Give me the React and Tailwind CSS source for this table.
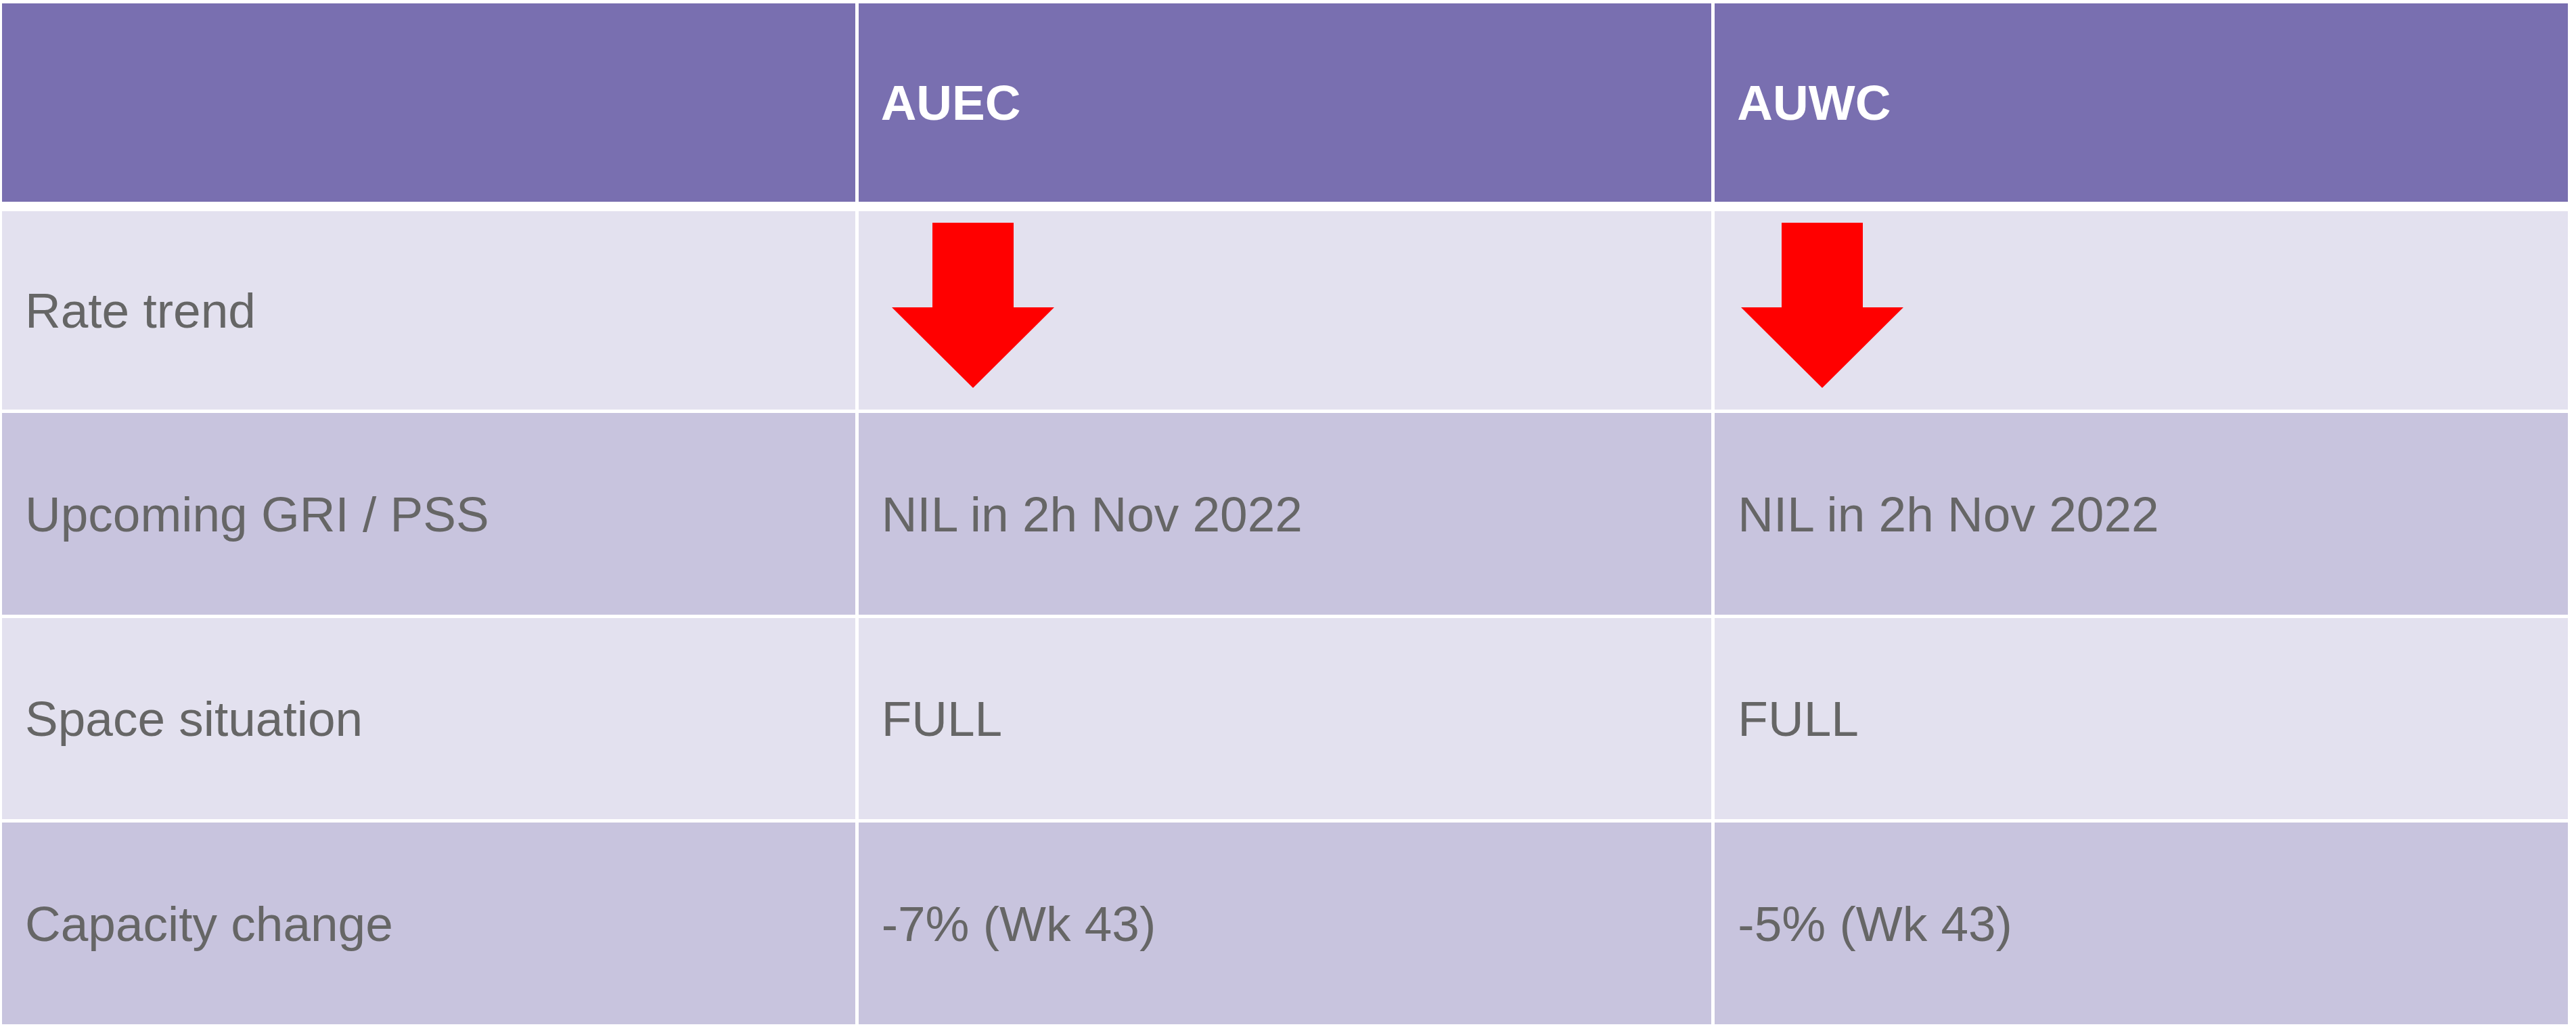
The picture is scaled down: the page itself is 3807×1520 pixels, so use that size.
import React from "react";

const rows = [
  { label: "Rate trend", auec: "arrow", auwc: "arrow", bg: "bg-[#e3e1ef]", h: "h-[293px]" },
  { label: "Upcoming GRI / PSS", auec: "NIL in 2h Nov 2022", auwc: "NIL in 2h Nov 2022", bg: "bg-[#c8c4de]", h: "h-[298px]" },
  { label: "Space situation", auec: "FULL", auwc: "FULL", bg: "bg-[#e3e1ef]", h: "h-[297px]" },
  { label: "Capacity change", auec: "-7% (Wk 43)", auwc: "-5% (Wk 43)", bg: "bg-[#c8c4de]", h: "h-[298px]" },
];

const DownArrow = () => (
  <svg width="240" height="244" viewBox="0 0 240 244">
    <polygon points="60,0 180,0 180,125 240,125 120,244 0,125 60,125" fill="#ff0000" />
  </svg>
);

const Cell = ({ value, bg, h, arrowOffset }) => {
  if (value === "arrow") {
    return (
      <div className={`${bg} ${h} pt-[17px]`} style={{ paddingLeft: arrowOffset }}>
        <DownArrow />
      </div>
    );
  }
  return (
    <div className={`${bg} ${h} flex items-center pl-[34px] text-[73px] text-[#666666]`}>
      {value}
    </div>
  );
};

const App = () => {
  return (
    <div className="min-h-screen bg-white pt-[5px] pl-[3px] font-['Liberation_Sans',Arial,sans-serif] leading-none">
      <div className="w-[3792px]">
        {/* Header */}
        <div className="grid grid-cols-3 gap-x-[5px] h-[293px] mb-[14px]">
          <div className="bg-[#796fb0]" />
          <div className="bg-[#796fb0] flex items-center pl-[33px] text-[73px] font-bold text-white">
            AUEC
          </div>
          <div className="bg-[#796fb0] flex items-center pl-[33px] text-[73px] font-bold text-white">
            AUWC
          </div>
        </div>

        {/* Body rows */}
        <div className="flex flex-col gap-y-[5px]">
          {rows.map((row) => (
            <div key={row.label} className="grid grid-cols-3 gap-x-[5px]">
              <div className={`${row.bg} ${row.h} flex items-center pl-[34px] text-[73px] text-[#666666]`}>
                {row.label}
              </div>
              <Cell value={row.auec} bg={row.bg} h={row.h} arrowOffset={49} />
              <Cell value={row.auwc} bg={row.bg} h={row.h} arrowOffset={39} />
            </div>
          ))}
        </div>
      </div>
    </div>
  );
};

export default App;
